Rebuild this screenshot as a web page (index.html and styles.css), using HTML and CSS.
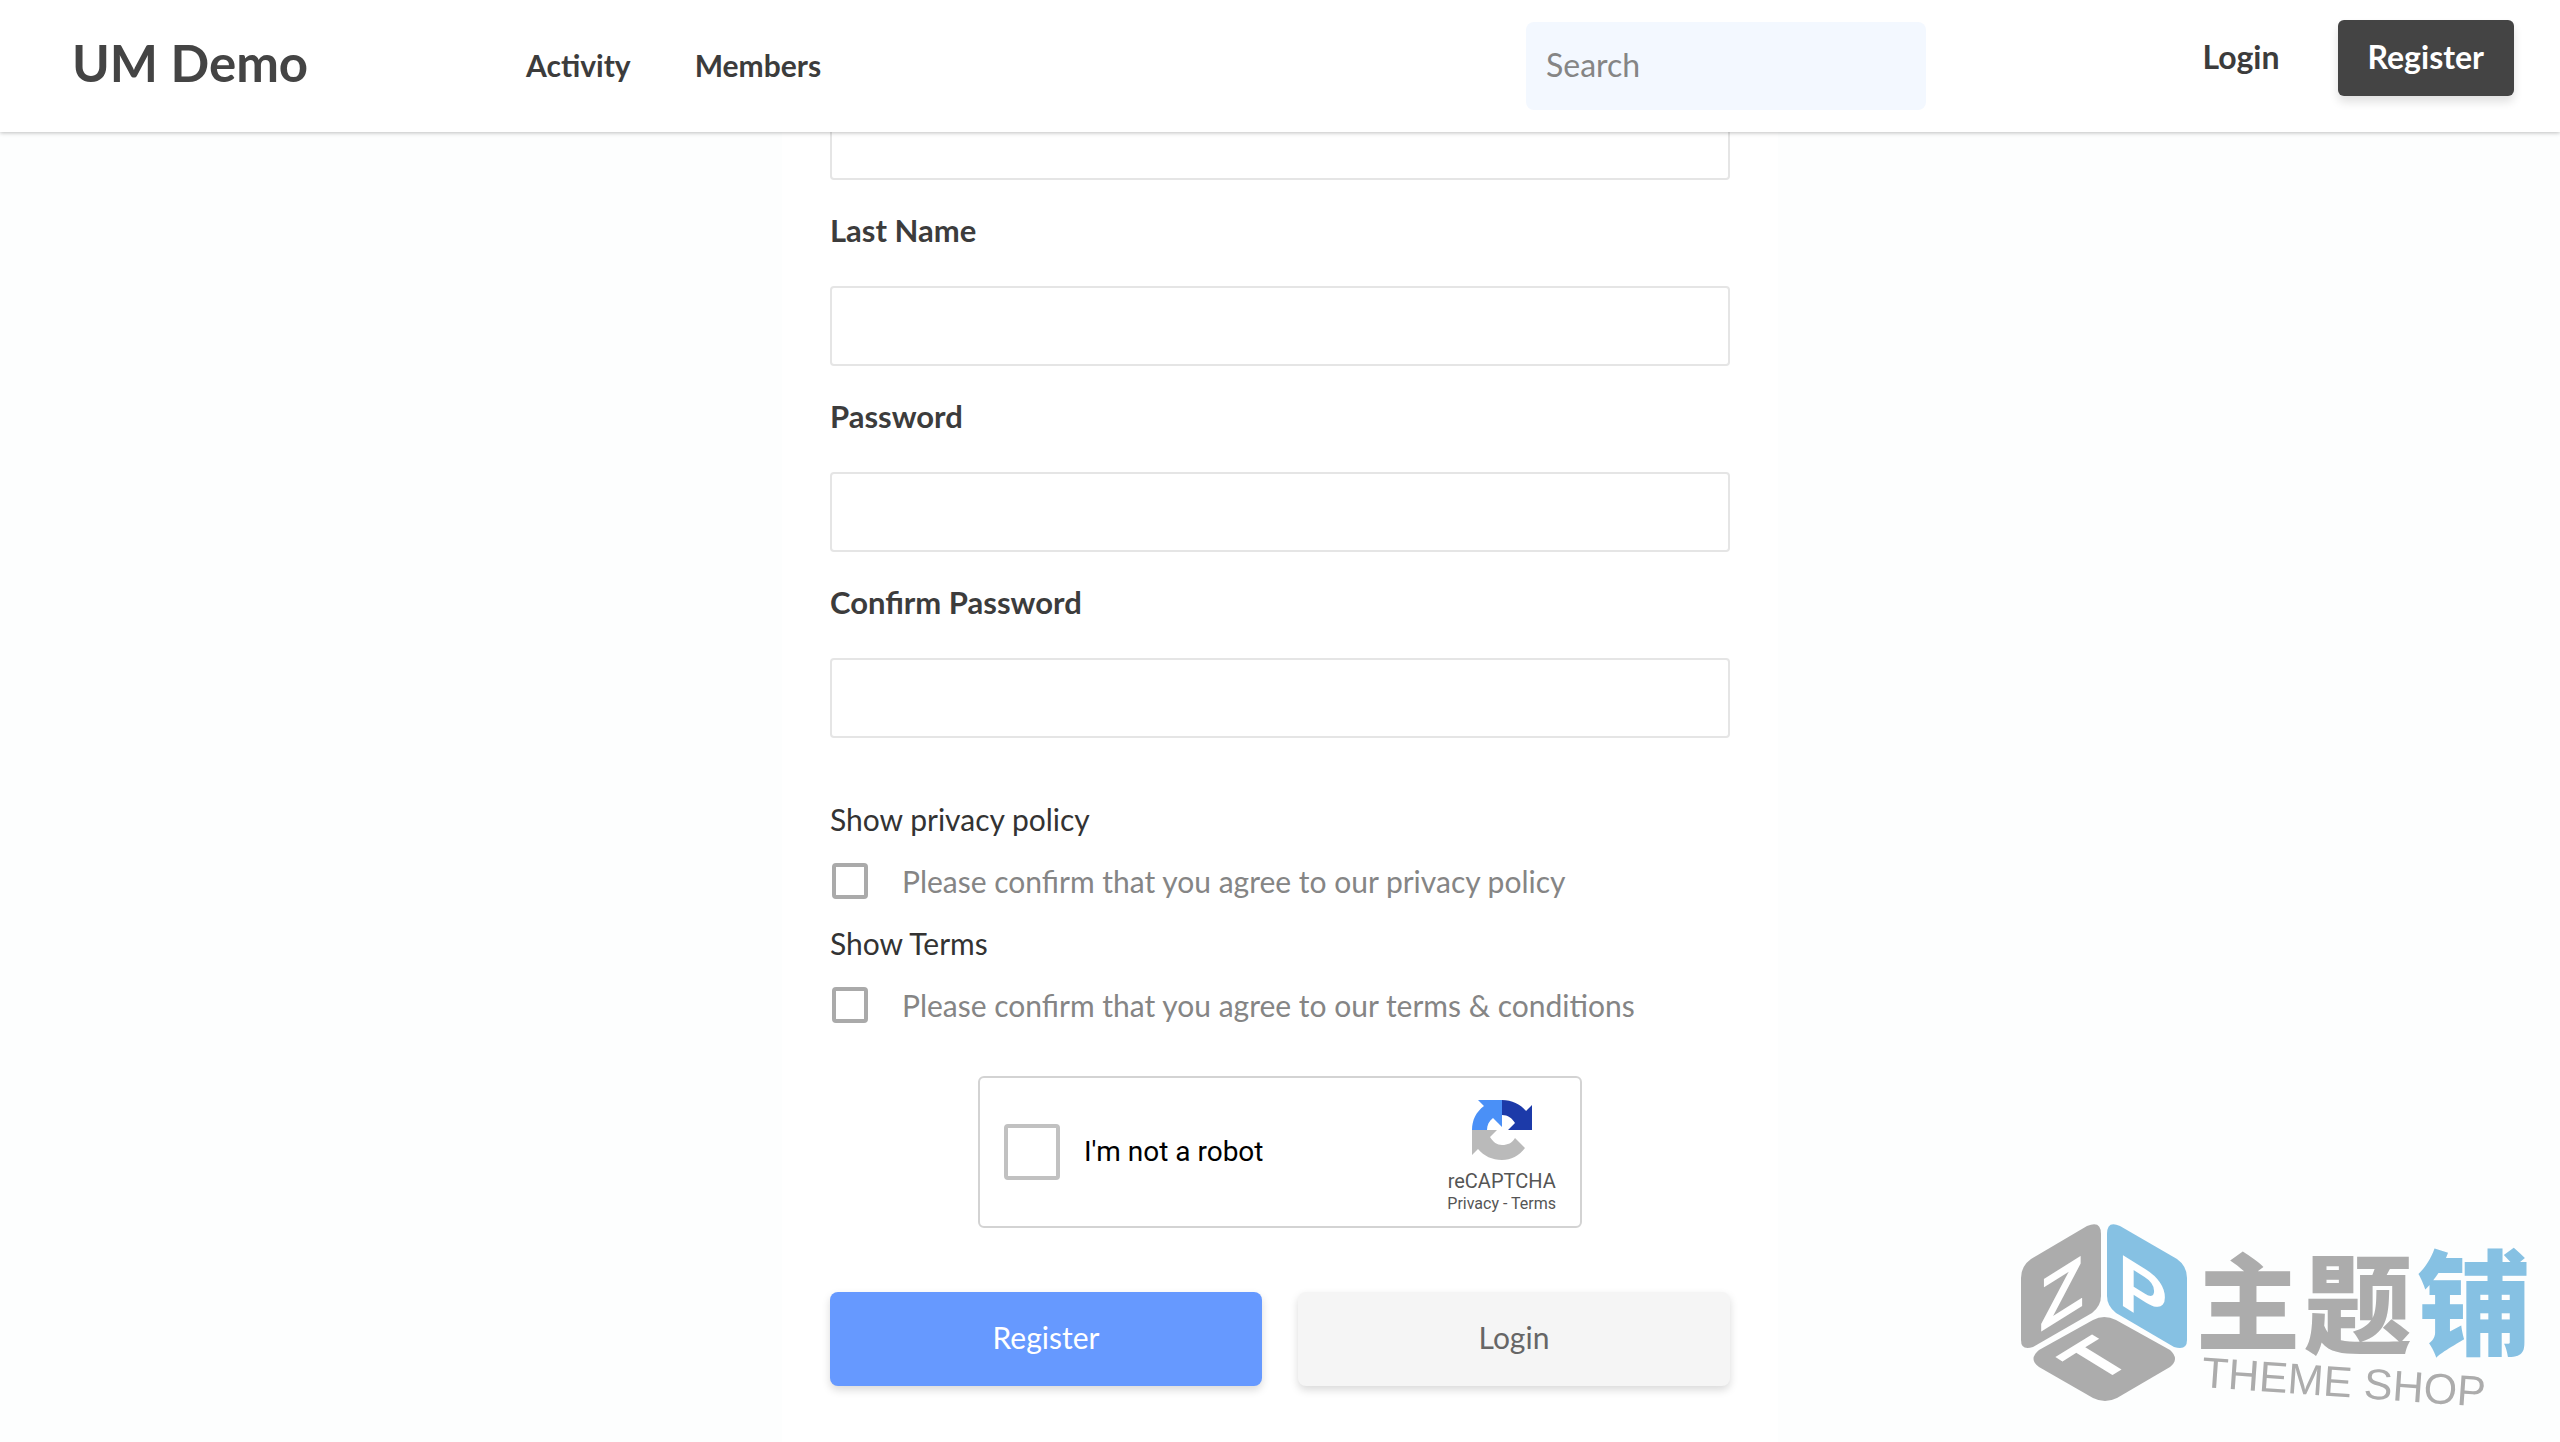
FILE: index.html
```html
<!DOCTYPE html>
<html lang="en">
<head>
    <meta charset="UTF-8">
    <meta name="viewport" content="width=device-width, initial-scale=1.0">
    <title>UM Demo</title>
    <link rel="stylesheet" href="styles.css">
</head>
<body>
    <header class="site-header">
        <a class="logo" href="#">UM Demo</a>
        <nav class="main-nav">
            <a href="#">Activity</a>
            <a href="#">Members</a>
        </nav>
        <input class="search" type="search" placeholder="Search" aria-label="Search">
        <div class="account">
            <a class="login-link" href="#">Login</a>
            <a class="register-link" href="#">Register</a>
        </div>
    </header>

    <main class="page">
        <form class="register-form">
            <input class="text-input" type="text" aria-label="First Name">

            <label class="field-label" for="last-name">Last Name</label>
            <input class="text-input" type="text" id="last-name">

            <label class="field-label" for="password">Password</label>
            <input class="text-input" type="password" id="password">

            <label class="field-label" for="confirm-password">Confirm Password</label>
            <input class="text-input" type="password" id="confirm-password">

            <div class="agreements">
                <a href="#">Show privacy policy</a>
                <label class="check-row">
                    <input type="checkbox">
                    <span>Please confirm that you agree to our privacy policy</span>
                </label>
                <a href="#">Show Terms</a>
                <label class="check-row">
                    <input type="checkbox">
                    <span>Please confirm that you agree to our terms &amp; conditions</span>
                </label>
            </div>

            <!-- reCAPTCHA -->
            <div class="captcha">
                <label class="captcha-check">
                    <input type="checkbox">
                    <span>I'm not a robot</span>
                </label>
                <div class="captcha-brand">
                    <svg class="captcha-logo" viewBox="0 0 60 60" aria-hidden="true">
                        <path fill="#4a90f7" d="M30 0H6l6 6C4 12 0 20 0 30h15c0-5 2-9 6-12l9 9z"/>
                        <path fill="#1c3aa9" d="M30 0c10 0 18 4 24 11l6-6v25H36l7-7c-3-5-7-8-13-8z"/>
                        <path fill="#bababa" d="M0 30h25l-7 7c3 5 7 8 12 8 6 0 10-2 13-7l10 10c-6 8-14 12-23 12-10 0-18-4-24-11l-6 6z"/>
                    </svg>
                    <span class="captcha-name">reCAPTCHA</span>
                    <span class="captcha-links"><a href="#">Privacy</a> - <a href="#">Terms</a></span>
                </div>
            </div>

            <div class="form-buttons">
                <button class="btn btn-primary" type="submit">Register</button>
                <button class="btn btn-light" type="button">Login</button>
            </div>
        </form>
    </main>

    <!-- Theme shop badge -->
    <svg class="theme-shop" viewBox="0 0 560 242" role="img" aria-label="Theme Shop">
        <g fill="#acacac">
            <path d="M87 26Q101 20 101 34V96Q101 106 92 113L33 147Q21 151 21 140V78Q21 66 31 59Z"/>
            <path d="M93 120Q104 114 116 120L170 150Q180 159 170 167L117 198Q105 204 93 198L39 167Q28 159 39 150Z"/>
        </g>
        <path fill="#86c1e3" d="M120 26Q107 20 107 34V96Q107 106 116 113L174 147Q187 151 187 140V78Q187 66 177 59Z"/>
        <g class="cube-letters">
            <text transform="translate(39 133) skewY(-32)">Z</text>
            <text transform="translate(118 103) skewY(32)">P</text>
            <text transform="matrix(.84 -.52 .85 .52 98 184)">T</text>
        </g>
        <g class="shop-name">
            <text x="196" y="142" font-size="104">主</text>
            <text x="304" y="145" font-size="108">题</text>
            <text class="shop-name-blue" x="417" y="146" font-size="114">铺</text>
        </g>
        <text class="shop-sub" transform="translate(201 187) rotate(4)">THEME SHOP</text>
    </svg>
</body>
</html>
```
FILE: styles.css
```css
* {
    box-sizing: border-box;
}

body {
    display: flex;
    flex-direction: column;
    min-height: 100vh;
    margin: 0;
    background-color: #fdfefe;
    color: #3c3c3c;
    font-family: Lato, "Noto Sans CJK SC", sans-serif;
    font-size: 30px;
    line-height: 40px;
}

a {
    color: inherit;
    text-decoration: none;
}

input, button {
    font: inherit;
}

.site-header {
    position: sticky;
    top: 0;
    z-index: 1;
    display: grid;
    grid-template-columns: 454px 1fr 400px 588px;
    align-items: center;
    height: 132px;
    padding: 20px 46px 20px 72px;
    background-color: #fff;
    box-shadow: 0 1px 4px rgba(0, 0, 0, 0.25);
    font-weight: bold;
}

.logo {
    padding-bottom: 6px;
    font-size: 51px;
    line-height: 60px;
    color: #444;
}

.main-nav {
    display: flex;
    gap: 64px;
    padding-bottom: 2px;
}

.search {
    height: 88px;
    padding: 0 20px 4px;
    border: none;
    border-radius: 8px;
    background-color: #f3f8ff;
    font-size: 32px;
    font-weight: normal;
}

.search::placeholder {
    color: #858585;
}

.account {
    display: flex;
    align-self: start;
    justify-content: flex-end;
    gap: 28px;
    font-size: 32px;
}

.login-link, .register-link {
    padding: 17px 30px 19px;
}

.register-link {
    border-radius: 6px;
    background-color: #444;
    box-shadow: 0 6px 10px rgba(0, 0, 0, 0.12);
    color: #fff;
}

.page {
    flex: 1;
    width: 996px;
    max-width: 100%;
    margin: -32px auto 0;
    padding: 0 48px 48px;
    background-color: #fff;
}

.text-input {
    display: block;
    width: 100%;
    height: 80px;
    padding: 0 20px;
    border: 2px solid #e5e5e5;
    border-radius: 4px;
    background-color: #fff;
}

.field-label {
    display: block;
    padding: 30px 0 36px;
    font-size: 31px;
    font-weight: bold;
}

.agreements {
    margin-top: 50px;
    line-height: 62px;
}

.agreements a {
    display: block;
    color: #333;
}

.check-row {
    display: flex;
    align-items: center;
    gap: 34px;
    color: #858585;
}

.check-row input, .captcha-check input {
    appearance: none;
    width: 36px;
    height: 36px;
    margin: 0 0 0 2px;
    border: 4px solid #aaa;
    border-radius: 4px;
    background-color: #fff;
}

.captcha {
    display: flex;
    align-items: center;
    justify-content: space-between;
    width: 604px;
    height: 152px;
    margin: 40px auto 64px;
    padding: 0 24px;
    border: 2px solid #d3d3d3;
    border-radius: 6px;
    font-family: Roboto, sans-serif;
}

.captcha-check {
    display: flex;
    align-items: center;
    gap: 24px;
    color: #000;
    font-size: 28px;
}

.captcha-check input {
    width: 56px;
    height: 56px;
    margin: 0;
    border-color: #c1c1c1;
}

.captcha-brand {
    display: flex;
    flex-direction: column;
    align-items: center;
    padding-top: 10px;
    color: #555;
}

.captcha-logo {
    width: 60px;
    height: 60px;
    margin-bottom: 8px;
}

.captcha-name {
    font-size: 20px;
    line-height: 26px;
}

.captcha-links {
    font-size: 16px;
    line-height: 20px;
}

.form-buttons {
    display: grid;
    grid-template-columns: 1fr 1fr;
    gap: 36px;
}

.btn {
    height: 94px;
    padding: 0 20px 4px;
    border: none;
    border-radius: 8px;
    box-shadow: 0 4px 8px rgba(0, 0, 0, 0.15);
}

.btn-primary {
    background-color: #6699ff;
    color: #fff;
}

.btn-light {
    background-color: #f5f5f5;
    color: #666;
}

.theme-shop {
    position: fixed;
    right: 0;
    bottom: 0;
    width: 560px;
    height: 242px;
}

.cube-letters {
    fill: #fff;
    font-family: "Liberation Sans", sans-serif;
    font-size: 74px;
    font-weight: bold;
}

.shop-name {
    fill: #acacac;
    font-family: "Noto Sans CJK SC", sans-serif;
    font-weight: 900;
}

.shop-name-blue {
    fill: #86c1e3;
}

.shop-sub {
    fill: #acacac;
    font-family: "Liberation Sans", sans-serif;
    font-size: 43px;
}
```
